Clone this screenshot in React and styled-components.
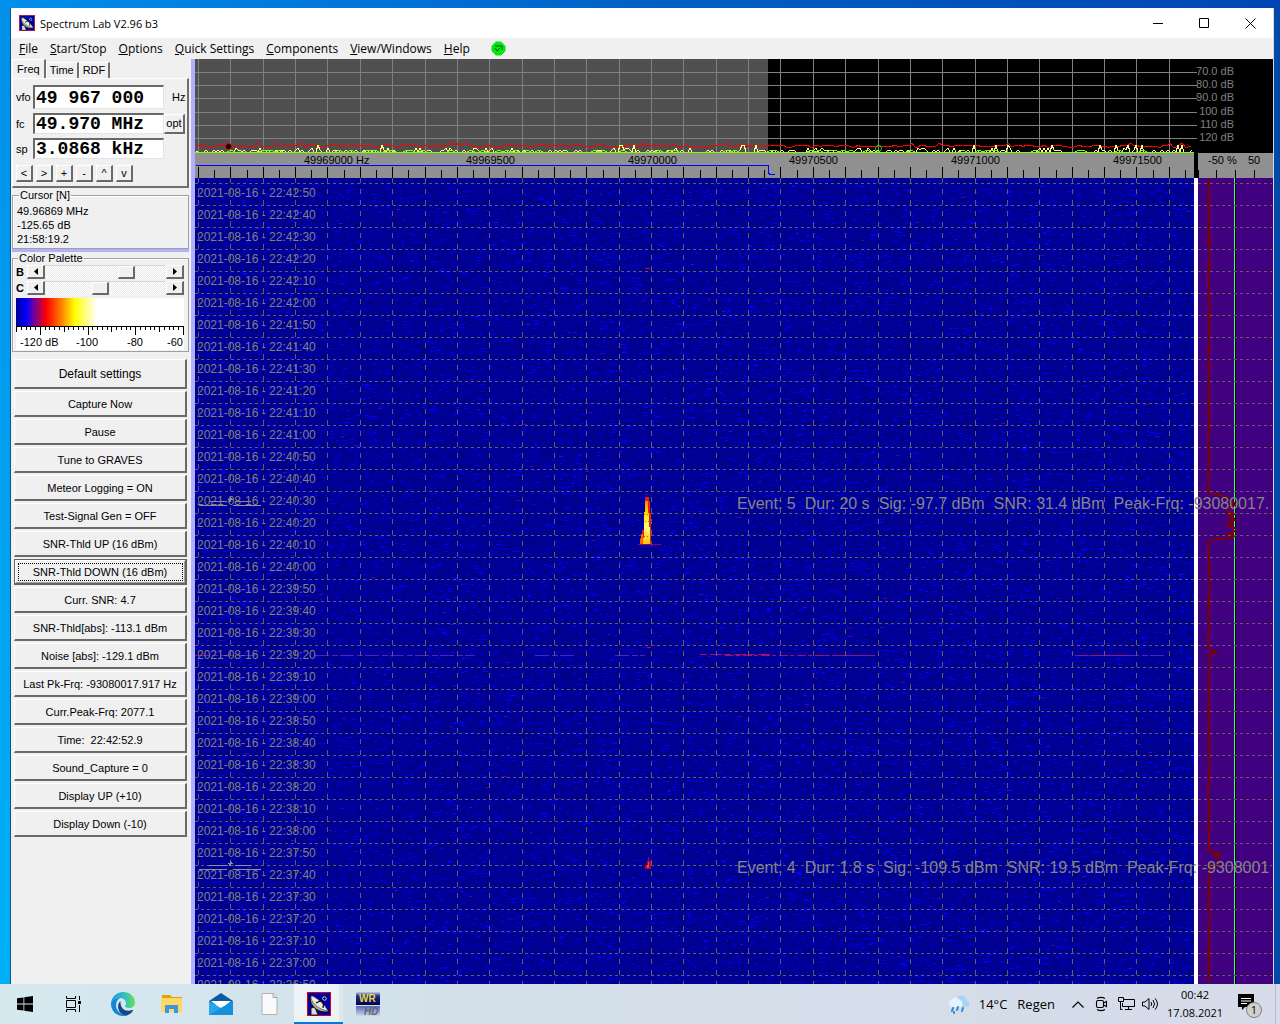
import React from 'react'
import styled, { createGlobalStyle, css } from 'styled-components'

const GlobalStyle = createGlobalStyle`
  * { box-sizing: border-box; }
  body { margin: 0; overflow: hidden; }
  button, input { font: inherit; color: inherit; margin: 0; }
`

const SANS = `'Liberation Sans', Arial, sans-serif`
const UI = `'Open Sans', 'Noto Sans', sans-serif`

// small repeatable random generator, so the noise is the same on each load
function makeRandom(seed) {
  let s = seed
  return () => {
    s = (s * 1664525 + 1013904223) % 4294967296
    return s / 4294967296
  }
}

const TILE_W = 1000
const TILE_H = 806

function noisePath(seed, count, minLen, maxLen) {
  const rnd = makeRandom(seed)
  let d = ''
  for (let i = 0; i < count; i++) {
    const x = Math.floor(rnd() * TILE_W)
    const y = Math.floor(rnd() * TILE_H)
    const len = minLen + Math.floor(rnd() * (maxLen - minLen + 1))
    d += `M${x} ${y}h${len}v1h-${len}z`
  }
  return d
}

const NOISE = [
  { color: '#000080', d: noisePath(11, 16000, 2, 7) },
  { color: '#0000b0', d: noisePath(23, 14000, 2, 5) },
  { color: '#0000d8', d: noisePath(37, 9000, 2, 4) },
  { color: '#0000ff', d: noisePath(41, 6000, 2, 4) },
  { color: '#5000a8', d: noisePath(59, 260, 2, 4) },
]

function redTrace() {
  const rnd = makeRandom(5)
  let d = 'M1 87'
  for (let x = 3; x < 999; x += 3) {
    const r = rnd()
    d += `L${x} ${r > 0.97 ? 84 : 86 + Math.floor(r * 3)}`
  }
  return d
}

function yellowTrace() {
  const rnd = makeRandom(77)
  let d = 'M1 92'
  for (let x = 3; x < 999; x += 2) {
    const r = rnd()
    d += `L${x} ${r > 0.97 ? 86 : r > 0.9 ? 89 : r > 0.65 ? 91 : 93}`
  }
  return d
}

function greenTrace() {
  const rnd = makeRandom(99)
  let d = 'M1 93'
  for (let x = 4; x < 999; x += 4) {
    d += `L${x} ${rnd() > 0.78 ? 91 : 93}`
  }
  return d
}

function balanceTrace() {
  const rnd = makeRandom(13)
  let d = 'M11 0'
  for (let y = 2; y < 806; y += 2) {
    if (y > 314 && y < 322) d += `L${12 + (y - 314) * 3} ${y}`
    else if (y >= 322 && y < 362) d += `L${rnd() > 0.75 ? 30 : 34 + Math.floor(rnd() * 5)} ${y}`
    else if (y === 474) d += `L20 ${y}`
    else if (y > 672 && y < 688) d += `L${y < 680 ? 22 - (y % 4) * 3 : 20} ${y}`
    else d += `L${10 + Math.floor(rnd() * 3)} ${y}`
  }
  return d
}

const GRID = 32.36
const gridXs = Array.from({ length: 31 }, (_, i) => Math.round(3 + i * GRID))
const minorXs = Array.from({ length: 31 }, (_, i) => Math.round(3 + (i + 0.5) * GRID))

const freqLabels = ['49969000', '49969500', '49970000', '49970500', '49971000', '49971500']
const dbLabels = ['-70.0 dB', '-80.0 dB', '-90.0 dB', '100 dB', '110 dB', '120 dB']
const dbLines = [13, 26, 39, 53, 66, 79]

const times = Array.from({ length: 37 }, (_, i) => {
  const t = 42 * 60 + 50 - i * 10
  return `22:${Math.floor(t / 60)}:${String(t % 60).padStart(2, '0')}`
})

/* ---------- desktop + window ---------- */

const Desktop = styled.div`
  height: 100vh;
  display: flex;
  flex-direction: column;
  background:
    linear-gradient(90deg, transparent 70%, #0048a8 100%),
    linear-gradient(180deg, #0090ea, #00b2f8);
  font-family: ${SANS};
  font-size: 11px;
  color: #000;
`

const Backdrop = styled.div`
  flex: 1;
  min-height: 0;
  display: flex;
  padding: 8px 6px 0 10px;
  background: linear-gradient(90deg, transparent, #0060c8 50%, #0046b4) top / 100% 8px no-repeat;
`

const Window = styled.main`
  flex: 1;
  min-width: 0;
  display: flex;
  flex-direction: column;
  background: #f0f0f0;
  border-left: 1px solid #14548a;
  border-right: 1px solid #d8d8e8;
`

const TitleBar = styled.header`
  height: 30px;
  flex: none;
  display: flex;
  align-items: center;
  background: #fff;
  padding-left: 8px;
`

const Title = styled.h1`
  flex: 1;
  margin: 0 0 0 5px;
  font-size: 11px;
  font-weight: 400;
  font-family: ${UI};
`

const CaptionButton = styled.button`
  width: 46px;
  height: 30px;
  padding: 0;
  border: 0;
  background: none;
  display: grid;
  place-items: center;
`

const MenuBar = styled.nav`
  height: 21px;
  flex: none;
  display: flex;
  align-items: center;
  padding-left: 2px;
  font-family: ${UI};
  font-size: 12px;
`

const MenuItem = styled.button`
  border: 0;
  background: none;
  padding: 0 6px;
  line-height: 20px;
  white-space: nowrap;

  &::first-letter { text-decoration: underline; }
`

const StatusLamp = styled.svg`
  margin-left: 15px;
`

const Body = styled.div`
  flex: 1;
  min-height: 0;
  display: flex;
`

/* ---------- side panel ---------- */

const Sidebar = styled.aside`
  width: 184px;
  flex: none;
  padding: 0 2px 0 1px;
  border-right: 4px solid #b0b0ff;
  overflow: hidden;
`

const Tabs = styled.div`
  display: flex;
  align-items: flex-end;
  height: 19px;
`

const Tab = styled.button`
  border: 0;
  border-top: 1px solid #fff;
  border-left: 1px solid #fff;
  border-right: 2px solid #707070;
  background: #f0f0f0;
  padding: 0 3px;
  height: 16px;
  line-height: 15px;
  ${p => p.$active && css`
    height: 19px;
    padding: 0 4px;
    line-height: 17px;
  `}
`

const FreqPage = styled.section`
  border: solid;
  border-width: 1px 2px 2px 1px;
  border-color: #fff #707070 #707070 #fff;
  padding: 4px 0 4px 3px;
  height: 110px;
`

const FreqRow = styled.div`
  display: flex;
  align-items: center;
  height: ${p => p.$tall ? '28px' : '25px'};
`

const RowLabel = styled.label`
  width: 17px;
  flex: none;
`

const FreqInput = styled.input`
  width: 131px;
  flex: none;
  height: ${p => p.$tall ? '24px' : '21px'};
  border: solid;
  border-width: 2px 1px 1px 2px;
  border-color: #696969 #e3e3e3 #e3e3e3 #696969;
  border-radius: 0;
  background: #fff;
  padding: 0 0 0 1px;
  font: bold 18px 'Liberation Mono', monospace;
  outline: none;
`

const Unit = styled.span`
  margin-left: 8px;
`

const raised = css`
  border: solid;
  border-width: 1px 2px 2px 1px;
  border-color: #fff #696969 #696969 #fff;
  background: #f0f0f0;
  padding: 0;
`

const SmallButton = styled.button`
  ${raised}
  width: ${p => p.$wide ? '21px' : '17px'};
  height: ${p => p.$wide ? '20px' : '17px'};
  line-height: 12px;
`

const StepRow = styled.div`
  display: flex;
  gap: 3px;
  padding-top: 4px;
`

const Group = styled.fieldset`
  min-width: 0;
  margin: 0;
  border: 1px solid #a0a0a0;
  box-shadow: inset 1px 1px #fff;
  padding: 0 4px;
  line-height: 14px;
`

const CursorGroup = styled(Group)`
  margin-top: 1px;
  padding-top: 2px;
  height: 60px;
`

const PaletteGroup = styled(Group)`
  height: 100px;
  padding: 0 4px 0 3px;
`

const Legend = styled.legend`
  padding: 0 1px;
  margin-left: 2px;
  line-height: 13px;
`

const Readout = styled.p`
  margin: 0;
  line-height: 14px;
`

const Splitter = styled.hr`
  height: 3px;
  margin: 0;
  border: 0;
  background: #b0b0ff;
`

const ScrollRow = styled.div`
  display: flex;
  align-items: center;
  height: 14px;
  margin-bottom: 2px;
`

const ScrollLabel = styled.label`
  width: 11px;
  font-weight: bold;
`

const ArrowButton = styled.button`
  ${raised}
  width: 18px;
  height: 14px;
  display: grid;
  place-items: center;
`

const Slider = styled.input`
  appearance: none;
  flex: 1;
  min-width: 0;
  height: 14px;
  background: repeating-conic-gradient(#fff 0 25%, #e8e8e8 0 50%) 0 0 / 2px 2px;
  border-top: 1px solid #d8d8d8;

  &::-webkit-slider-thumb {
    appearance: none;
    width: 17px;
    height: 13px;
    border: solid;
    border-width: 1px 2px 2px 1px;
    border-color: #fff #696969 #696969 #fff;
    background: #f0f0f0;
  }
`

const PaletteScale = styled.div`
  background: #fff;
  height: 52px;
  margin-top: 3px;
  overflow: hidden;
`

const GradientBar = styled.div`
  height: 28px;
  background: linear-gradient(90deg, #000090 0, #0000ff 6%, #6000b0 10%, #ff0000 18%, #ff8000 27%, #ffff00 35%, #fff 48%);
`

const ScaleLabels = styled.div`
  display: grid;
  grid-template-columns: 56px 51px 40px auto;
  padding-left: 4px;
  line-height: 14px;
`

const ButtonStack = styled.div`
  display: flex;
  flex-direction: column;
  gap: 2px;
  padding: 7px 2px 0 2px;
`

const MacroButton = styled.button`
  ${raised}
  height: 26px;
  white-space: pre;
  ${p => p.$large && css`
    height: 30px;
    font-size: 12px;
  `}
  ${p => p.$focused && css`
    border: 1px solid #646464;
    border-right-width: 2px;
    border-bottom-width: 2px;
    box-shadow: inset 1px 1px #fff, inset -1px -1px #a0a0a0;
    outline: 1px dotted #000;
    outline-offset: -5px;
  `}
`

/* ---------- plots ---------- */

const Plots = styled.section`
  flex: 1;
  min-width: 0;
  display: grid;
  grid-template-columns: minmax(0, 1fr) 79px;
  grid-template-rows: 94px 25px minmax(0, 1fr);
  position: relative;
  overflow: hidden;
  background: #000;
`

const Plot = styled.svg`
  display: block;
  width: 100%;
  height: 100%;
  background: ${p => p.$bg || '#000'};
  font-family: ${SANS};
  font-size: 11px;
  shape-rendering: crispEdges;
`

const LevelScale = styled(Plot)`
  overflow: visible;
`

const TimeList = styled.ol`
  position: absolute;
  left: 2px;
  top: 123px;
  margin: 0;
  padding: 0;
  list-style: none;
  color: #808080;
  font-size: 12px;
  line-height: 22px;
`

const EventNote = styled.p`
  position: absolute;
  left: 542px;
  top: ${p => p.$top}px;
  margin: 0;
  display: flex;
  gap: 9px;
  color: #868686;
  font-size: 16px;
  line-height: 20px;
  white-space: nowrap;
`

/* ---------- task bar ---------- */

const TaskBar = styled.footer`
  height: 40px;
  flex: none;
  display: flex;
  align-items: stretch;
  background: linear-gradient(90deg, #d5e9ef, #d3e0ea 35%, #d6dbe9);
  font-family: ${UI};
`

const TaskButton = styled.button`
  width: 49px;
  border: 0;
  padding: 0;
  background: none;
  display: grid;
  place-items: center;
  ${p => p.$active && css`
    background: #edf2f6;
    box-shadow: inset 0 -2px #0078d7, inset -4px 0 #dde7ee;
  `}
`

const Tray = styled.div`
  margin-left: auto;
  display: flex;
  align-items: center;
`

const Weather = styled.button`
  display: flex;
  align-items: center;
  gap: 10px;
  border: 0;
  padding: 0;
  background: none;
  font: 13px ${UI};
  margin-right: 11px;
`

const TrayButton = styled.button`
  width: 24px;
  height: 40px;
  border: 0;
  padding: 0;
  background: none;
  display: grid;
  place-items: center;
`

const Clock = styled.time`
  width: 66px;
  text-align: center;
  font-size: 11px;
  line-height: 18px;
`

const NoticeButton = styled(TrayButton)`
  width: 48px;
  border-right: 1px solid #b8bcc8;
  margin-right: 4px;
  padding: 4px 4px 0 0;
`

function DishIcon({ size }) {
  return (
    <svg width={size} height={size} viewBox="0 0 24 24">
      <rect x="0.5" y="0.5" width="23" height="23" fill="#0000a8" stroke="#d00020" />
      <path d="M4 23V16l4-1 3 8z" fill="#d8d8d8" stroke="#000" strokeWidth="0.8" />
      <path d="M4 4C1 9 7 21 20 20c2 0 2-1 1-2L7 4C6 3 5 3 4 4z" fill="#a8a8a0" stroke="#000" />
      <path d="M4 4c5 0 15 10 17 15C12 18 3 10 4 4z" fill="#e8e8e0" stroke="#404040" strokeWidth="0.6" />
      <path d="M9 11 17 7l-1 9M17 7l3-3" fill="none" stroke="#000" strokeWidth="1.2" />
      <circle cx="17.5" cy="6.5" r="1.8" fill="none" stroke="#c8d8ff" />
    </svg>
  )
}

function Arrow({ left }) {
  return (
    <svg width="4" height="7" viewBox="0 0 4 7">
      <path d={left ? 'M4 0v7L0 3.5z' : 'M0 0v7l4-3.5z'} />
    </svg>
  )
}

function ScrollControl({ id, name, value }) {
  return (
    <ScrollRow>
      <ScrollLabel htmlFor={id}>{name}</ScrollLabel>
      <ArrowButton aria-label="Less"><Arrow left /></ArrowButton>
      <Slider id={id} type="range" defaultValue={value} />
      <ArrowButton aria-label="More"><Arrow /></ArrowButton>
    </ScrollRow>
  )
}

function SidePanel() {
  const macros = [
    'Capture Now', 'Pause', 'Tune to GRAVES', 'Meteor Logging = ON', 'Test-Signal Gen = OFF',
    'SNR-Thld UP (16 dBm)', 'SNR-Thld DOWN (16 dBm)', 'Curr. SNR: 4.7', 'SNR-Thld[abs]: -113.1 dBm',
    'Noise [abs]: -129.1 dBm', 'Last Pk-Frq: -93080017.917 Hz', 'Curr.Peak-Frq: 2077.1',
    'Time:  22:42:52.9', 'Sound_Capture = 0', 'Display UP (+10)', 'Display Down (-10)',
  ]
  return (
    <Sidebar>
      <Tabs>
        <Tab $active>Freq</Tab>
        <Tab>Time</Tab>
        <Tab>RDF</Tab>
      </Tabs>
      <FreqPage>
        <FreqRow $tall>
          <RowLabel htmlFor="vfo">vfo</RowLabel>
          <FreqInput $tall id="vfo" defaultValue="49 967 000" />
          <Unit>Hz</Unit>
        </FreqRow>
        <FreqRow>
          <RowLabel htmlFor="fc">fc</RowLabel>
          <FreqInput id="fc" defaultValue="49.970 MHz" />
          <SmallButton $wide>opt</SmallButton>
        </FreqRow>
        <FreqRow>
          <RowLabel htmlFor="sp">sp</RowLabel>
          <FreqInput id="sp" defaultValue="3.0868 kHz" />
        </FreqRow>
        <StepRow>
          {['<', '>', '+', '-', '^', 'v'].map(s => <SmallButton key={s}>{s}</SmallButton>)}
        </StepRow>
      </FreqPage>
      <CursorGroup>
        <Legend>Cursor [N]</Legend>
        <Readout>49.96869 MHz</Readout>
        <Readout>-125.65 dB</Readout>
        <Readout>21:58:19.2</Readout>
      </CursorGroup>
      <Splitter />
      <PaletteGroup>
        <Legend>Color Palette</Legend>
        <ScrollControl id="bright" name="B" value={70} />
        <ScrollControl id="contrast" name="C" value={45} />
        <PaletteScale>
          <GradientBar />
          <svg width="100%" height="9" display="block" shapeRendering="crispEdges">
            <rect width="100%" height="1" />
            {Array.from({ length: 36 }, (_, i) => (
              <rect key={i} x={Math.round(i * 4.77)} width="1" height={i % 10 === 5 ? 9 : i % 5 === 0 ? 6 : 4} />
            ))}
          </svg>
          <ScaleLabels>
            <span>-120 dB</span><span>-100</span><span>-80</span><span>-60</span>
          </ScaleLabels>
        </PaletteScale>
      </PaletteGroup>
      <ButtonStack>
        <MacroButton $large>Default settings</MacroButton>
        {macros.map(m => (
          <MacroButton key={m} $focused={m.startsWith('SNR-Thld DOWN')}>{m}</MacroButton>
        ))}
      </ButtonStack>
    </Sidebar>
  )
}

function SpectrumPlot() {
  return (
    <Plot>
      <rect width="573" height="94" fill="#505050" />
      {dbLines.map(y => <rect key={y} y={y} width="100%" height="1" fill="#808080" />)}
      {gridXs.map(x => <rect key={x} x={x} width="1" height="93" fill="#808080" />)}
      <path d={redTrace()} fill="none" stroke="#ff0000" />
      <path d={yellowTrace()} fill="none" stroke="#ffff80" />
      <path d={greenTrace()} fill="none" stroke="#80ff00" />
      <rect y="93" width="100%" height="1" fill="#80ff00" />
      <g shapeRendering="auto">
        <circle cx="33.5" cy="87.5" r="3" fill="#000" stroke="#ff0000" />
        <circle cx="683.5" cy="89.5" r="3" fill="none" stroke="#00ff00" />
      </g>
    </Plot>
  )
}

function FrequencyAxis() {
  return (
    <Plot $bg="#909090">
      <path d="M1 12.5h572.5v8h1v1h5" fill="none" stroke="#0000ff" />
      {gridXs.map(x => <rect key={x} x={x} y="14" width="1" height="11" />)}
      {minorXs.map(x => <rect key={x} x={x} y="17" width="1" height="8" />)}
      {freqLabels.map((f, i) => (
        <text key={f} x={109 + Math.round(i * GRID * 5)} y="11">{f}{i === 0 ? ' Hz' : ''}</text>
      ))}
    </Plot>
  )
}

function Marker({ y }) {
  return (
    <g stroke="#909098" strokeWidth="1">
      <path d={`M14 ${y + 2.5}h18M40 ${y + 2.5}h16M4 ${y + 6.5}h28M38 ${y + 6.5}h28`} />
      <path d={`M35.5 ${y - 2}v5M33 ${y + 0.5}h5M34 ${y + 3}l3-4`} />
    </g>
  )
}

function Waterfall() {
  return (
    <Plot $bg="#000092">
      <defs>
        <pattern id="noise" width={TILE_W} height={TILE_H} patternUnits="userSpaceOnUse">
          {NOISE.map(n => <path key={n.color} d={n.d} fill={n.color} />)}
        </pattern>
        <linearGradient id="burst" x1="0" y1="0" x2="0" y2="1">
          <stop offset="0" stopColor="#ff8000" />
          <stop offset="0.3" stopColor="#ffe000" />
          <stop offset="0.6" stopColor="#ffff80" />
          <stop offset="1" stopColor="#ffc000" />
        </linearGradient>
      </defs>
      <rect width="100%" height="100%" fill="url(#noise)" />
      <path d="M0 477.5h60M120 477.5h160M340 477.5h40M420 477.5h30M620 477.5h60M880 477.5h90" stroke="#5020d0" strokeDasharray="14 3 6 2" />
      <path d="M530 477.5h150M1 477.5h8" stroke="#a01070" strokeDasharray="9 2 4 3" />
      <path d="M505 476.5h70M885 477.5h48" stroke="#a01070" strokeDasharray="7 3 12 2" />
      <path d="M450 90.5h5M452 469.5h4" stroke="#d00040" />
      {Array.from({ length: 60 }, (_, i) => (
        <line key={i} x1="0" x2="100%" y1={5.5 + i * 22} y2={5.5 + i * 22} stroke="#606060" strokeDasharray="3 3" />
      ))}
      {gridXs.map(x => (
        <line key={x} x1={x + 0.5} x2={x + 0.5} y1="0" y2="100%" stroke="#606060" strokeDasharray="5 6" />
      ))}
      <path d="M450 319h4v4h1v12h1v31h-11v-6h2v-8h2v-16h1z" fill="#e82010" />
      <path d="M450 323h3v12h1v14h1v17h-7v-6h1v-26h1z" fill="url(#burst)" />
      <path d="M446 356h2v10h-3v-5h1z" fill="#ff6000" />
      <path d="M449 336.5h4M450 343.5h4M449 358.5h4" stroke="#e06000" strokeDasharray="1 2" />
      <path d="M443 366.5h23" stroke="#a00060" />
      <path d="M453 679h1v4h2v8h-6v-4h2v-4h1z" fill="#c00030" />
      <path d="M453 684h1v6h-2v-3h1z" fill="#ff4020" />
      <Marker y={321} />
      <Marker y={685} />
    </Plot>
  )
}

function BalancePlot() {
  return (
    <Plot $bg="#400080">
      <rect x="40" width="1" height="100%" fill="#40ff80" />
      <rect x="41" width="1" height="100%" fill="#000" />
      <path d={balanceTrace()} fill="none" stroke="#800000" strokeWidth="2" transform="translate(4)" />
      {Array.from({ length: 60 }, (_, i) => (
        <line key={i} x1="4" x2="78" y1={5.5 + i * 22} y2={5.5 + i * 22} stroke="#606060" strokeDasharray="3 3" />
      ))}
      <rect width="4" height="100%" fill="#fff" />
    </Plot>
  )
}

function Display() {
  return (
    <Plots>
      <SpectrumPlot />
      <LevelScale>
        {dbLines.map((y, i) => (
          <g key={y} fill="#808080">
            <rect y={y} width="3" height="1" />
            <text x="40" y={y + 3} textAnchor="end">{dbLabels[i]}</text>
          </g>
        ))}
      </LevelScale>
      <FrequencyAxis />
      <Plot $bg="#909090">
        <rect width="4" height="25" />
        {[4, 22, 41, 60].map(x => <rect key={x} x={x} y="17" width="1" height="8" />)}
        <text x="14" y="11">-50 %</text>
        <text x="54" y="11">50</text>
      </Plot>
      <Waterfall />
      <BalancePlot />
      <TimeList>
        {times.map(t => <li key={t}>2021-08-16 - {t}</li>)}
      </TimeList>
      <EventNote $top={435}>
        <span>Event: 5</span>
        <span>Dur: 20 s</span>
        <span>Sig: -97.7 dBm</span>
        <span>SNR: 31.4 dBm</span>
        <span>Peak-Frq: -93080017.</span>
      </EventNote>
      <EventNote $top={799}>
        <span>Event: 4</span>
        <span>Dur: 1.8 s</span>
        <span>Sig: -109.5 dBm</span>
        <span>SNR: 19.5 dBm</span>
        <span>Peak-Frq: -9308001</span>
      </EventNote>
    </Plots>
  )
}

function Tasks() {
  return (
    <TaskBar>
      <TaskButton aria-label="Start">
        <svg width="16" height="16" viewBox="0 0 16 16">
          <path d="M0 2.3 6.5 1.4V7.6H0zM7.3 1.3 16 0v7.6H7.3zM0 8.4h6.5v6.2L0 13.7zM7.3 8.4H16V16l-8.7-1.3z" />
        </svg>
      </TaskButton>
      <TaskButton aria-label="Task view">
        <svg width="17" height="16" viewBox="0 0 17 16" fill="none" stroke="#000">
          <path d="M1.5 0v2.5h9V0M1.5 16v-2.5h9V16M1.5 4.5h9v7h-9zM14.5 0v4M14.5 9v7" />
          <path d="M13 5h3v3h-3z" fill="#000" stroke="none" />
        </svg>
      </TaskButton>
      <TaskButton aria-label="Edge">
        <svg width="24" height="24" viewBox="0 0 24 24">
          <defs>
            <linearGradient id="edgeTop" x1="0" x2="1">
              <stop offset="0" stopColor="#1b9de2" />
              <stop offset="0.6" stopColor="#35c1b8" />
              <stop offset="1" stopColor="#6ddf50" />
            </linearGradient>
          </defs>
          <path d="M0 12C0 5 5.500 0 12 0c7 0 12 5 12 10.500C24 14 21.500 16 18.500 16c-3 0-4.500-1-4.500-2 0-.8 1-1.200 1-3C15 8.500 12.500 6 9 6c-5 0-8 3-9 6z" fill="url(#edgeTop)" />
          <path d="M0 12c1-4 4.500-6 9-6-4 2-6 9-1 14 3 3 6 4 6 4C6 25 0 19 0 12z" fill="#1684d8" />
          <path d="M9.500 9C6 12 6.500 18 10 21.500c2 2 4 2.500 5 2.200 3-.8 5.500-2.700 7-5 .4-.7-.2-1-.8-.7C16 20 9 18 9.500 9z" fill="#114a8b" />
        </svg>
      </TaskButton>
      <TaskButton aria-label="Explorer">
        <svg width="22" height="20" viewBox="0 0 22 20">
          <path d="M1 1h8l2 2h10v5H1z" fill="#e0a010" />
          <path d="M0 4h21v14H0z" fill="#ffd765" />
          <path d="M4 19v-7q0-1 1-1h11q1 0 1 1v7h-4v-4H8v4z" fill="#3a96dd" />
        </svg>
      </TaskButton>
      <TaskButton aria-label="Mail">
        <svg width="24" height="24" viewBox="0 0 24 24">
          <path d="M0 9 12 1l12 8v4H0z" fill="#0c59a4" />
          <path d="M2 9h20l-10 8z" fill="#fff" />
          <path d="M0 9l12 7 12-7v14H0z" fill="#28a8ea" />
          <path d="M0 23l24-14v14z" fill="#1490df" />
        </svg>
      </TaskButton>
      <TaskButton aria-label="Document">
        <svg width="17" height="22" viewBox="0 0 17 22">
          <path d="M1 .5h11l4 4V21.500H1z" fill="#fafafa" stroke="#b0b0b0" />
          <path d="M12 .5v4h4" fill="none" stroke="#a0a0a0" />
        </svg>
      </TaskButton>
      <TaskButton $active aria-label="Spectrum Lab"><DishIcon size={24} /></TaskButton>
      <TaskButton aria-label="WRplus HD">
        <svg width="24" height="24" viewBox="0 0 24 24" fontFamily="Liberation Sans, sans-serif" fontWeight="bold">
          <defs>
            <linearGradient id="wrTop" x1="0" y1="0" x2="0" y2="1">
              <stop offset="0" stopColor="#c8d0e8" />
              <stop offset="0.3" stopColor="#203088" />
              <stop offset="1" stopColor="#000050" />
            </linearGradient>
            <linearGradient id="wrLow" x1="0" y1="0" x2="0" y2="1">
              <stop offset="0" stopColor="#5868b0" />
              <stop offset="1" stopColor="#d0d8e8" />
            </linearGradient>
          </defs>
          <rect width="24" height="13" fill="url(#wrTop)" />
          <rect y="14" width="24" height="10" fill="url(#wrLow)" />
          <text x="3" y="10" fontSize="10" fill="#e8d840">WR</text>
          <text x="8" y="23" fontSize="10" fontStyle="italic" fill="#606878">HD</text>
        </svg>
      </TaskButton>
      <Tray>
        <Weather>
          <svg width="22" height="20" viewBox="0 0 22 20">
            <path d="M9 12a5 5 0 0 1 1-9 6 6 0 0 1 10 4 3 3 0 0 1-1 6z" fill="#a8d4f4" />
            <path d="M4 13a4 4 0 0 1 0-7 5 5 0 0 1 9 0 4 4 0 0 1 1 7z" fill="#e4f2fc" />
            <path d="M6 14l-1 3M11 13l-1 3M16 14l-1 3M7 18v1" stroke="#2a88dd" strokeWidth="2" strokeLinecap="round" />
          </svg>
          <span>14°C</span>
          <span>Regen</span>
        </Weather>
        <TrayButton aria-label="Show hidden icons">
          <svg width="12" height="7" viewBox="0 0 12 7" fill="none" stroke="#000" strokeWidth="1.2"><path d="M.5 6.500 6 1l5.500 5.500" /></svg>
        </TrayButton>
        <TrayButton aria-label="Meet now">
          <svg width="14" height="16" viewBox="0 0 14 16" fill="none" stroke="#000" strokeWidth="1.1">
            <rect x="1.500" y="4.500" width="7" height="7" rx="1.500" />
            <path d="M8.500 7 11.500 5.500v5L8.500 9M2 2.500Q6 .2 10 2.500M2 13.500q4 2.300 8 0" />
          </svg>
        </TrayButton>
        <TrayButton aria-label="Network">
          <svg width="17" height="14" viewBox="0 0 17 14" fill="none" stroke="#000">
            <path d="M6 2.500h10.500v7H4.500V6M10.500 9.500v3M7 12.500h7M.5.5h5v4h-5zM2.500 4.500v8h2" />
          </svg>
        </TrayButton>
        <TrayButton aria-label="Volume">
          <svg width="17" height="14" viewBox="0 0 17 14" fill="none" stroke="#000">
            <path d="M.5 5v4h2.500L7 12.500v-11L3 5zM9 5q1.500 2 0 4M11 3q3 4 0 8M13 1.300q5 5.700 0 11.400" />
          </svg>
        </TrayButton>
        <Clock>00:42<br />17.08.2021</Clock>
        <NoticeButton aria-label="Notifications">
          <svg width="26" height="26" viewBox="0 0 26 26">
            <path d="M1 1h16v13H8l-3 3v-3H1z" />
            <path d="M4 5.500h10M4 8h10M4 10.500h6" stroke="#fff" />
            <circle cx="17" cy="17" r="7.500" fill="#d0d0d0" stroke="#808080" />
            <text x="17" y="21" fontSize="11" textAnchor="middle">1</text>
          </svg>
        </NoticeButton>
      </Tray>
    </TaskBar>
  )
}

function App() {
  return (
    <Desktop>
      <GlobalStyle />
      <Backdrop>
        <Window>
          <TitleBar>
            <DishIcon size={16} />
            <Title>Spectrum Lab V2.96 b3</Title>
            <CaptionButton aria-label="Minimize">
              <svg width="10" height="10"><path d="M0 5.500h10" stroke="#000" /></svg>
            </CaptionButton>
            <CaptionButton aria-label="Maximize">
              <svg width="10" height="10"><path d="M.5.5h9v9h-9z" fill="none" stroke="#000" /></svg>
            </CaptionButton>
            <CaptionButton aria-label="Close">
              <svg width="11" height="11"><path d="M.5.5l10 10M10.500.5l-10 10" stroke="#000" /></svg>
            </CaptionButton>
          </TitleBar>
          <MenuBar>
            {['File', 'Start/Stop', 'Options', 'Quick Settings', 'Components', 'View/Windows', 'Help'].map(m => (
              <MenuItem key={m}>{m}</MenuItem>
            ))}
            <StatusLamp width="15" height="15" viewBox="0 0 15 15">
              <path d="M5 .5h5L14.500 5v5L10 14.500H5L.5 10V5z" fill="#00e810" />
              <path d="M4 5h7v4M4 7l2 3 3-3" fill="none" stroke="#085008" />
            </StatusLamp>
          </MenuBar>
          <Body>
            <SidePanel />
            <Display />
          </Body>
        </Window>
      </Backdrop>
      <Tasks />
    </Desktop>
  )
}

export default App
